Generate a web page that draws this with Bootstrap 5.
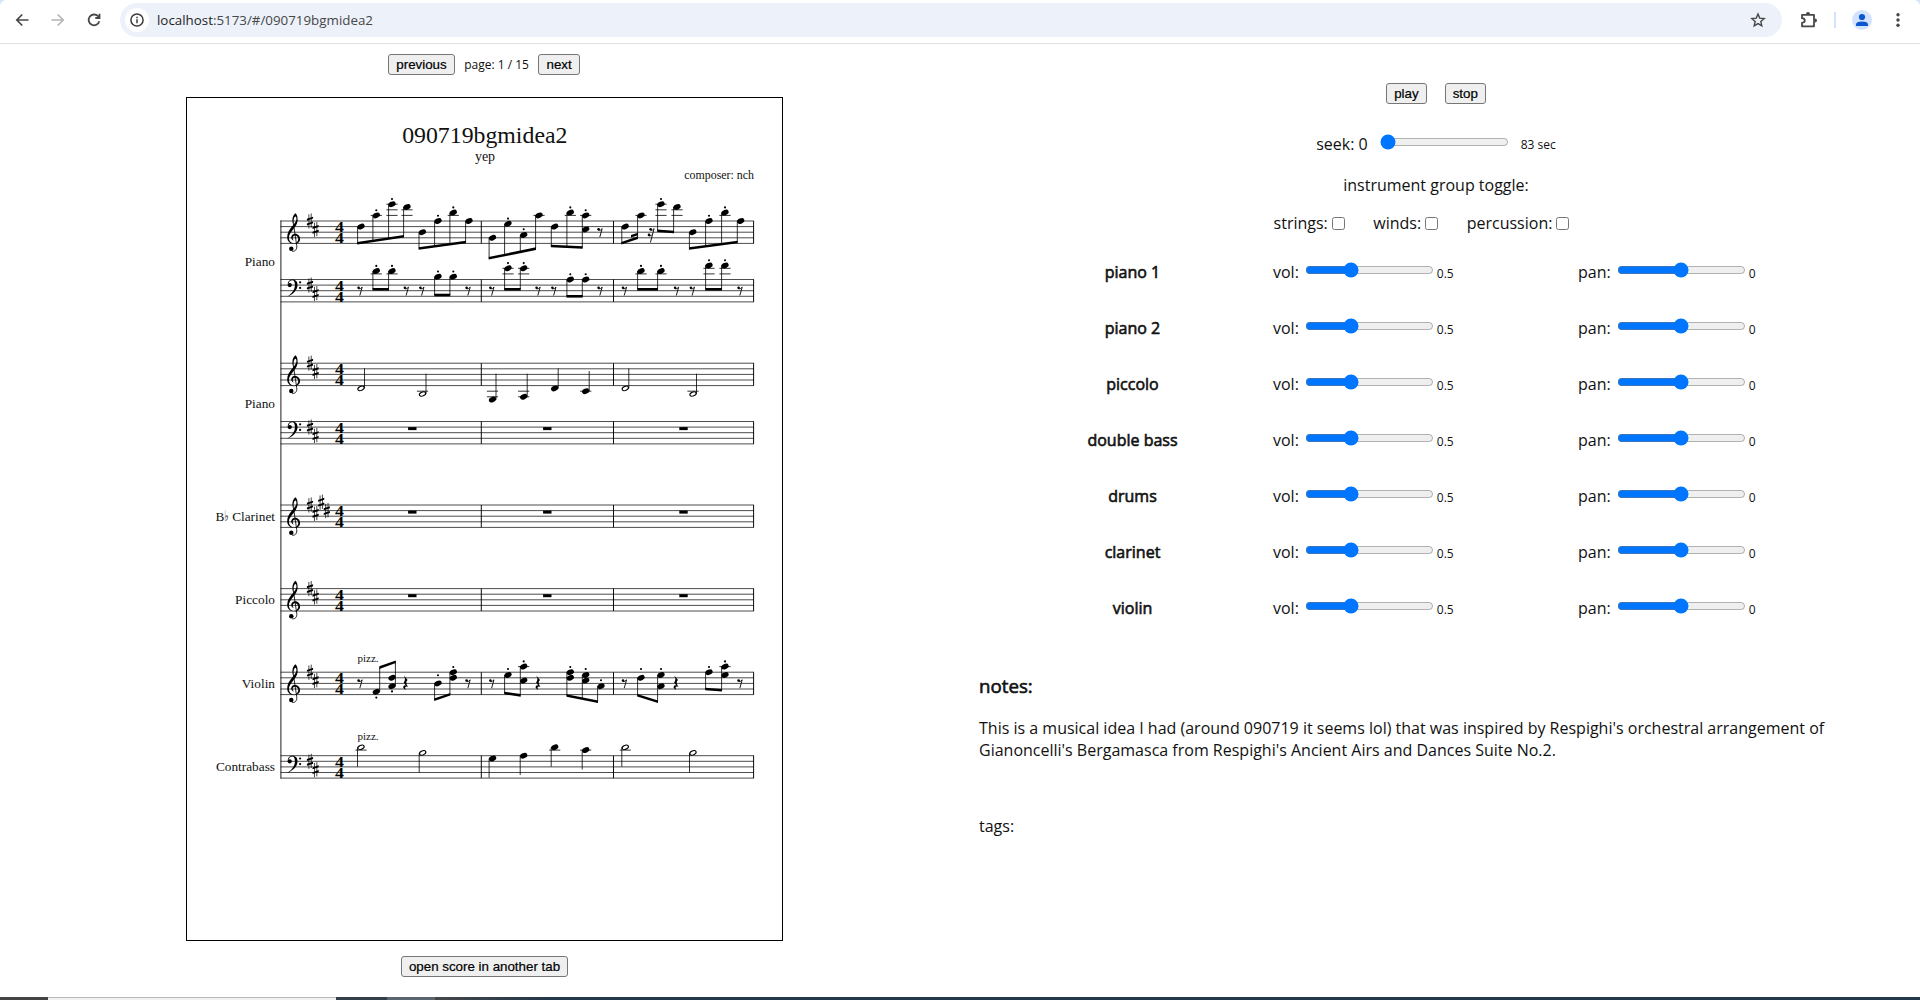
<!DOCTYPE html>
<html lang="en">
<head>
<meta charset="utf-8">
<meta name="viewport" content="width=device-width, initial-scale=1">
<title>090719bgmidea2</title>
<link href="https://cdn.jsdelivr.net/npm/bootstrap@5.3.0/dist/css/bootstrap.min.css" rel="stylesheet">
<style>
  body { height: 1000px; overflow: hidden; background: #fff; color: #111; font-family: "Open Sans", "Noto Sans", sans-serif; font-size: 16px; line-height: 22px; }
  .browser-top { background: #d3e3fd; flex: none; }
  .toolbar { height: 44px; background: #fff; border-bottom: 1px solid #dfe1e3; border-radius: 6px 6px 0 0; padding: 3px 14px 6px; }
  .tool-icon { width: 16px; height: 16px; flex: none; display: block; }
  .tool-icon + .tool-icon { margin-left: 20px; }
  .omnibox { height: 34px; width: 1664px; margin-left: 18px; border-radius: 17px; background: #ecf1fa; padding: 0 16px 0 5px; }
  .site-info { width: 24px; height: 24px; border-radius: 50%; background: #fff; }
  .url { font-size: 13.35px; color: #474747; margin-left: 8px; white-space: nowrap; }
  .url b { font-weight: 400; color: #1f1f1f; }
  .ext-icon { margin-left: 18px; flex: none; }
  .divider { width: 2px; height: 16px; background: #d3e3fd; margin-left: 16px; }
  .avatar { margin-left: 16px; flex: none; }
  .push { font: 13.333px "Liberation Sans", Arial, sans-serif; color: #000; background: #efefef; border: 1px solid #767676; border-radius: 3px; padding: 0 7px; height: 21px; line-height: 19px; -webkit-text-stroke: .2px #000; }
  .score-col { width: 969px; }
  .control-col { width: 914px; margin-left: 10px; padding-top: 39px; }
  .tiny { font-size: 12px; }
  .sheet { width: 597px; height: 844px; border: 1px solid #000; margin-top: 22px; }
  .sheet svg { display: block; font-family: "Liberation Serif", serif; }
  .pager { padding: 10px 1px 0 0; gap: 9.5px; height: 31px; }
  .open-tab { margin-top: 15px; }
  .transport { gap: 18px; }
  .seek { margin-top: 25px; }
  .seek input[type=range] { margin: 0 12px; position: relative; top: -1px; }
  .seek .seek-label { padding-top: 3px; }
  .seek .tiny { padding-top: 5px; }
  .toggle-title { margin-top: 18px; }
  .toggles { margin: 16px 29px 0 0; gap: 28.5px; }
  input[type=range] { width: 129px; height: 16px; margin: -5px 3px 0 6px; }
  input[type=checkbox] { width: 13px; height: 13px; margin: 0 0 0 4px; }
  .mixers { padding-top: 10px; }
  .mixer { display: grid; grid-template-columns: 294px 305px auto; height: 56px; align-items: center; }
  .mixer .instrument { padding-left: 13px; }
  .faux-bold { -webkit-text-stroke: .6px #111; }
  .notes-head { font-size: 18.72px; margin-top: 39px; }
  .notes-text { margin: 20px 0 54px; width: 880px; }
  .strip { height: 3px; flex: none; }
  .s1 { width: 48px; background: #454545; }
  .s2 { width: 288px; background: #f2f2f2; border-top: 1px solid #b5b9bb; }
  .s3 { width: 51px; background: #333e48; }
  .s4 { width: 48px; background: #5b6570; }
  .s5 { width: 110px; background: linear-gradient(90deg, #45484a, #24384a); }
  .s6 { background: #24384a; }
</style>
<script defer src="https://cdn.jsdelivr.net/npm/bootstrap@5.3.0/dist/js/bootstrap.bundle.min.js"></script>
</head>
<body class="d-flex flex-column">

<header class="browser-top">
  <div class="toolbar d-flex align-items-center">
    <svg class="tool-icon" viewBox="0 0 16 16" fill="none" stroke="#474747" stroke-width="1.7"><path d="M14.500 8H3M8.300 2.500L2.800 8l5.500 5.500"/></svg>
    <svg class="tool-icon" viewBox="0 0 16 16" fill="none" stroke="#b4b4b4" stroke-width="1.7"><path d="M1.500 8H13M7.700 2.500L13.200 8l-5.500 5.500"/></svg>
    <svg class="tool-icon" viewBox="0 0 16 16" fill="none" stroke="#474747" stroke-width="1.8"><path d="M13.300 9.200A5.400 5.400 0 1 1 12 4.200L13.300 5.600M13.500 1.800V6H9.300"/></svg>
    <div class="omnibox d-flex align-items-center">
      <span class="site-info d-flex align-items-center justify-content-center"><svg width="14" height="14" viewBox="0 0 14 14" fill="none" stroke="#3c3c3c" stroke-width="1.5"><circle cx="7" cy="7" r="6.100"/><path d="M7 6.200V10.300M7 3.700V5.200"/></svg></span>
      <span class="url"><b>localhost</b>:5173/#/090719bgmidea2</span>
      <svg class="ms-auto" width="16" height="16" viewBox="0 0 16 16" fill="none" stroke="#474747" stroke-width="1.4"><path d="M8 2l1.700 4.100 4.500.4-3.400 3 1 4.400L8 11.600l-3.800 2.300 1-4.400-3.400-3 4.500-.4z"/></svg>
    </div>
    <svg class="ext-icon" width="18" height="18" viewBox="0 0 18 18"><path d="M2 3.800H14V15.300H2V11.800Q4.800 11.500 4.800 9.500T2 7.200z" fill="none" stroke="#474747" stroke-width="1.8" stroke-linejoin="round"/><path d="M6 3a2 2 0 0 1 4 0zM15 7.400a2 2 0 0 1 0 4z" fill="#474747"/></svg>
    <span class="divider"></span>
    <svg class="avatar" width="20" height="20" viewBox="0 0 20 20"><circle cx="10" cy="10" r="10" fill="#d3e3fd"/><circle cx="10" cy="7" r="3.100" fill="#0b57d0"/><path d="M4 16v-1.500Q4 11.500 10 11.500t6 3V16z" fill="#0b57d0"/></svg>
    <svg class="ext-icon" width="16" height="16" viewBox="0 0 16 16" fill="#474747"><circle cx="8" cy="2.800" r="1.700"/><circle cx="8" cy="8" r="1.700"/><circle cx="8" cy="13.200" r="1.700"/></svg>
  </div>
</header>

<main class="d-flex flex-grow-1">
  <section class="score-col d-flex flex-column align-items-center">
    <div class="pager d-flex align-items-center">
      <button class="push">previous</button>
      <span class="tiny">page: 1 / 15</span>
      <button class="push">next</button>
    </div>
    <div class="sheet">
      <svg id="score" width="595" height="842" viewBox="187 98 595 842">
        <defs>
          <g id="treble">
            <path d="M17-33C15-24 0-16 0-1C0 7 6 11 12 11C6 9 3 5 3 0C3-10 17-18 18.500-30z"/>
            <path d="M12-7C18-8.500 23-4 23 2C23 8 18 11 12 11C17 9.500 19.800 6 19.800 2C19.800-2 16-4.500 13-3.800C9-3 9 3 12.500 5C6 4 5-5 12-7z"/>
            <path d="M10.200-25C8-33 10-41 15-44C18-41 19-36 18.500-30L16.500-30C17-35 16-38.500 14.500-38C12-37 10.800-32 11.800-26z"/>
            <path d="M11-26L17 14C18 21 14 24.500 9 24.200" fill="none" stroke="#000" stroke-width="1.500"/>
            <circle cx="7.300" cy="19.500" r="4"/>
          </g>
          <g id="bass">
            <circle cx="4.500" cy="0" r="3.800"/>
            <path d="M1-1C1-7 5-10 9.500-10C15-10 18.500-6 18.500 0C18.500 9 10 17 0 21C8 15 13.800 9 13.800 0C13.800-5 12.500-8.600 9-8.600C6-8.600 3.500-7 3-4z"/>
            <circle cx="23" cy="-5" r="2"/><circle cx="23" cy="5" r="2"/>
          </g>
          <g id="sharp"><path d="M-2-12V13.500M2.200-13.500V12" stroke="#000" stroke-width="1.300"/><path d="M-5.500-2.600L5.500-6.300V-2.800L-5.500.9zM-5.500 5.900L5.500 2.200V5.700L-5.500 9.400z" transform="translate(0 -1.500)"/></g>
          <g id="eighth"><circle cx="-1.400" cy="-2.900" r="1.300"/><path d="M-1.500-1.800Q.8-1.600 2.200-3.600L-.2 4.800" fill="none" stroke="#000" stroke-width=".9"/></g>
          <g id="sixteenth"><circle cx="-.6" cy="-2.900" r="1.300"/><circle cx="-2.200" cy="2.700" r="1.300"/><path d="M-.7-1.800Q1.600-1.600 2.900-3.600L-.8 10.300M-2.200 3.700Q.2 4 1.300 2" fill="none" stroke="#000" stroke-width=".9"/></g>
          <g id="quarter"><path d="M-1.700-7.800L2-3.300Q-.8-.8 2.400 3.300Q-1.800 2.300.2 6.600Q-4.200 4.200-1.300 1.800L.3 2.100L-1.900-.8Q.5-3.400-1.700-7.800z"/></g>
          <ellipse id="head" rx="3.800" ry="2.600" transform="rotate(-24)"/>
          <g id="open"><ellipse rx="3.300" ry="2" transform="rotate(-24)" fill="none" stroke="#000" stroke-width="1.100"/></g>
        </defs>
        <g fill="#111">
          <text x="484.800" y="143" text-anchor="middle" font-size="23.800">090719bgmidea2</text>
          <text x="485" y="161.400" text-anchor="middle" font-size="14">yep</text>
          <text x="754" y="179.400" text-anchor="end" font-size="11.900">composer: nch</text>
          <g text-anchor="end" font-size="13.300">
            <text x="275" y="266">Piano</text>
            <text x="275" y="408">Piano</text>
            <text x="275" y="521">Clarinet</text>
            <text x="224.300" y="521">B</text>
            <text transform="translate(228.600 521) scale(.62 1)" font-family="DejaVu Sans" font-size="14.500">♭</text>
            <text x="275" y="604.400">Piccolo</text>
            <text x="275" y="688">Violin</text>
            <text x="275" y="771.400">Contrabass</text>
          </g>
          <text x="357.500" y="661.500" font-size="11">pizz.</text>
          <text x="357.500" y="739.500" font-size="11">pizz.</text>
        </g>
      </svg>
    </div>
    <button class="push open-tab">open score in another tab</button>
  </section>

  <section class="control-col">
    <div class="transport d-flex justify-content-center">
      <button class="push">play</button>
      <button class="push">stop</button>
    </div>
    <div class="seek d-flex justify-content-center align-items-center">
      <span class="seek-label">seek: 0</span>
      <input type="range" min="0" max="83" value="0">
      <span class="tiny">83 sec</span>
    </div>
    <div class="toggle-title text-center">instrument group toggle:</div>
    <div class="toggles d-flex justify-content-center">
      <label class="d-flex align-items-center">strings:<input type="checkbox"></label>
      <label class="d-flex align-items-center">winds:<input type="checkbox"></label>
      <label class="d-flex align-items-center">percussion:<input type="checkbox"></label>
    </div>
    <div id="mixers" class="mixers"></div>
    <div class="faux-bold notes-head">notes:</div>
    <p class="notes-text">This is a musical idea I had (around 090719 it seems lol) that was inspired by Respighi's orchestral arrangement of Gianoncelli's Bergamasca from Respighi's Ancient Airs and Dances Suite No.2.</p>
    <div>tags:</div>
  </section>
</main>

<footer class="strip d-flex">
  <span class="s1"></span><span class="s2"></span><span class="s3"></span><span class="s4"></span><span class="s5"></span><span class="s6 flex-grow-1"></span>
</footer>

<script>
  const names = ['piano 1', 'piano 2', 'piccolo', 'double bass', 'drums', 'clarinet', 'violin'];
  document.getElementById('mixers').innerHTML = names.map(n => `
    <div class="mixer">
      <div class="instrument faux-bold text-center">${n}</div>
      <div class="d-flex align-items-center">vol:<input type="range" min="0" max="1.5" step="0.1" value="0.5"><span class="tiny pt-1">0.5</span></div>
      <div class="d-flex align-items-center">pan:<input type="range" min="-1" max="1" step="0.1" value="0"><span class="tiny pt-1">0</span></div>
    </div>`).join('');

  // Score engraving. p counts half staff spaces down from the top line.
  const H = 2.8, tops = [221, 279.5, 363.2, 421.5, 505, 588.6, 672.2, 755.7];
  let out = '';
  const line = (x1, y1, x2, y2, w, c) => out += `<path d="M${x1} ${y1}L${x2} ${y2}" stroke="${c || '#000'}" stroke-width="${w}"/>`;
  const use = (id, x, y, s) => out += `<use href="#${id}" transform="translate(${x} ${y})${s ? ` scale(${s})` : ''}"/>`;
  const Y = (s, p) => tops[s] + p * H;
  const ledgers = (s, x, p) => {
    for (let q = -2; q >= p; q -= 2) line(x - 5.6, Y(s, q), x + 5.6, Y(s, q), .8);
    for (let q = 10; q <= p; q += 2) line(x - 5.6, Y(s, q), x + 5.6, Y(s, q), .8);
  };
  const dot = (x, y) => out += `<circle cx="${x}" cy="${y}" r="1.050"/>`;

  line(280.9, tops[0] - .5, 280.9, tops[7] + 8 * H + .5, 1.1, '#333');
  tops.forEach((t, s) => {
    for (let i = 0; i < 5; i++) line(280.5, t + i * 2 * H, 754, t + i * 2 * H, .75, '#111');
    [481.3, 613.5, 753.6].forEach(x => line(x, t, x, t + 8 * H, .95));
    const low = [1, 3, 7].includes(s);
    use(low ? 'bass' : 'treble', 287.2, Y(s, low ? 2 : 6), .56);
    const keys = low ? [2, 5] : s === 4 ? [0, 3, -1, 2] : [0, 3];
    keys.forEach((p, i) => use('sharp', 310 + i * 5.6, Y(s, p), .56));
    // Time signature digits, slightly wider than the text face
    [4, 8].forEach(p => out += `<text transform="translate(339.400 ${Y(s, p) - .2}) scale(1.150 1)" text-anchor="middle" font-size="15.500" font-weight="700">4</text>`);
    if (s > 2 && s < 6) [412.3, 547.3, 683.5].forEach(x => out += `<rect x="${x - 4.2}" y="${Y(s, 2)}" width="8.400" height="3"/>`);
  });

  // Beamed group: each note is [x, pitches, staccato dot distance]; the beam runs from y1 to y2.
  function group(s, y1, y2, notes, up) {
    const off = up ? 3.4 : -3.4, xa = notes[0][0] + off, xb = notes[notes.length - 1][0] + off;
    notes.forEach(([x, ps, d]) => {
      ps.forEach(p => { ledgers(s, x, p); use('head', x, Y(s, p)); });
      const sx = x + off, by = y1 + (y2 - y1) * (sx - xa) / (xb - xa);
      line(sx, Y(s, up ? Math.max(...ps) : Math.min(...ps)), sx, by, .8);
      if (d) dot(x, up ? Y(s, Math.max(...ps)) - d : Y(s, Math.min(...ps)) - d);
    });
    out += `<path d="M${xa - .4} ${y1 - 1.3}L${xb + .4} ${y2 - 1.3}V${y2 + 1.3}L${xa - .4} ${y1 + 1.3}z"/>`;
  }
  group(0, 243.3, 236.3, [[361, [2]], [376.3, [-2], 5.2], [392, [-6], 5.2], [407, [-5]]]);
  group(0, 248.5, 242, [[422.4, [4]], [438, [0], 5.2], [453.3, [-3], 5.2], [469, [0]]]);
  group(0, 258.3, 248.6, [[492.5, [6]], [508, [1], 5.2], [523.7, [5], 5.8], [539, [-2]]]);
  group(0, 246, 247.5, [[554.7, [2]], [570.3, [-3], 5.2], [585.7, [-2, 3], 5.2]]);
  group(0, 243.2, 237.6, [[625.2, [2]], [641, [-2]]]);
  out += '<path d="M631 234.900L638 232.700V235.300L631 237.500z"/>';
  group(0, 230.8, 232, [[661, [-6], 5.2], [677, [-5]]]);
  group(0, 248.5, 242, [[692.8, [4]], [709, [0], 5.2], [725, [-3], 5.2], [740.7, [0]]]);

  group(1, 289.3, 289.3, [[376.3, [-3], 5.2], [392, [-3], 5.2]]);
  group(1, 295, 295, [[438, [-1], 5.2], [453.3, [-1], 5.2]]);
  group(1, 289.3, 289.3, [[508, [-4], 5.2], [523.7, [-4], 5.2]]);
  group(1, 296.3, 296.3, [[570.3, [0], 5.2], [585.7, [0], 5.2]]);
  group(1, 289.3, 289.3, [[641, [-3], 5.2], [661, [-3], 5.2]]);
  group(1, 289.3, 289.3, [[709, [-5], 5.2], [725, [-5], 5.2]]);

  group(6, 667.6, 661.8, [[376.3, [7], -5.8], [392, [2, 5], -5.2]], true);
  group(6, 699.7, 694.3, [[438, [4], 8.2], [453.3, [0, 2], 5.2]]);
  group(6, 693, 695.4, [[508, [1], 6], [523.7, [-2, 3], 5.2]]);
  group(6, 695.5, 701.7, [[570.3, [0, 2], 5.2], [585.7, [1, 3], 6], [601, [5], 6]]);
  group(6, 695.3, 701.7, [[641, [2], 8.8], [661, [1, 5], 6]]);
  group(6, 689, 690.3, [[709, [0], 5.2], [725, [-2, 1], 5.2]]);

  [[0, 600], [1, 360], [1, 406.3], [1, 421.8], [1, 468], [1, 491.8], [1, 538], [1, 553.8], [1, 600], [1, 624.4], [1, 676.5], [1, 692.3], [1, 740],
   [6, 360], [6, 468], [6, 491.8], [6, 624.4], [6, 740]].forEach(([s, x]) => use('eighth', x, Y(s, 4)));
  use('sixteenth', 651.2, Y(0, 4));
  [405.6, 538, 676].forEach(x => use('quarter', x, Y(6, 4)));

  // Single notes: staff, x, pitch, stem end y, head shape.
  [[2, 361, 9, 368.3, 'open'], [2, 422.5, 11, 373.7, 'open'], [2, 492.5, 13, 373.7, 'head'], [2, 523.7, 12, 373.7, 'head'],
   [2, 554.7, 9, 368.3, 'head'], [2, 585.7, 10, 371, 'head'], [2, 625.3, 9, 368.3, 'open'], [2, 693, 11, 373.7, 'open'],
   [7, 361, -3, 766.7, 'open'], [7, 422.7, -1, 772.5, 'open'], [7, 492.6, 1, 777.7, 'head'], [7, 523.7, 0, 775, 'head'],
   [7, 554.7, -3, 766.7, 'head'], [7, 585.7, -2, 769.5, 'head'], [7, 625.3, -3, 766.7, 'open'], [7, 693, -1, 772.5, 'open']
  ].forEach(([s, x, p, e, h]) => {
    const sx = x + (s === 2 ? 3.5 : -3.5);
    ledgers(s, x, p); use(h, x, Y(s, p)); line(sx, Y(s, p), sx, e, .8);
  });
  document.getElementById('score').insertAdjacentHTML('beforeend', out);
</script>
</body>
</html>
